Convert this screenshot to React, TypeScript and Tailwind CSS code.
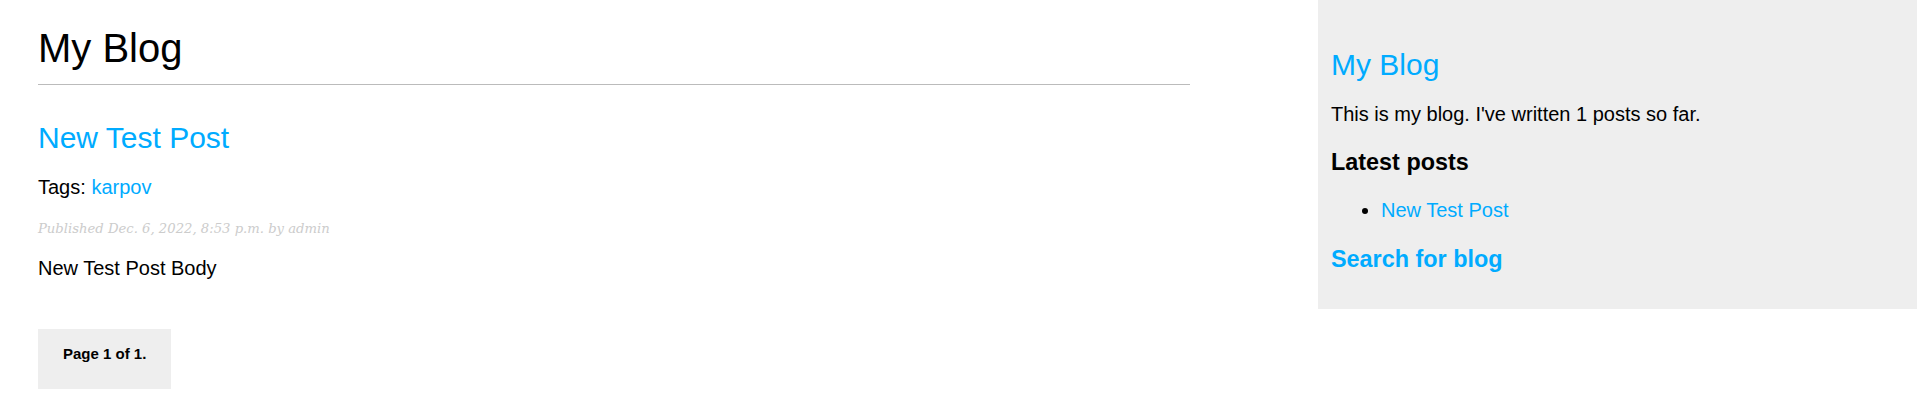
import React from 'react';

const posts = [
  {
    id: 1,
    title: 'New Test Post',
    tags: ['karpov'],
    published: 'Dec. 6, 2022, 8:53 p.m.',
    author: 'admin',
    body: 'New Test Post Body',
  },
];

const App: React.FC = () => {
  return (
    <div className="flex items-start justify-between bg-white font-['Liberation_Sans',Arial,sans-serif] text-[20px] leading-[23px] text-black">
      {/* Content */}
      <div className="w-[1190px] pl-[38px]">
        <h1 className="mt-[25px] border-b border-[#bbbbbb] pb-[13px] text-[40px] font-normal leading-[46px]">
          My Blog
        </h1>

        {posts.map((post) => (
          <div key={post.id}>
            <h2 className="mt-[36px] text-[30px] font-normal leading-[34px]">
              <a href="#" className="text-[#00abff]">
                {post.title}
              </a>
            </h2>
            <p className="mt-[21px]">
              Tags:{' '}
              {post.tags.map((tag) => (
                <a key={tag} href="#" className="text-[#00abff]">
                  {tag}
                </a>
              ))}
            </p>
            <p className="mt-[21px] font-['DejaVu_Serif',Georgia,serif] text-[13.2px] italic leading-[17px] text-[#cccccc]">
              Published {post.published} by {post.author}
            </p>
            <p className="mt-[20px]">{post.body}</p>
          </div>
        ))}

        <div className="mt-[49px] inline-block bg-[#eeeeee] px-[25px] pt-[16px] pb-[27px] text-[15px] font-bold leading-[17px]">
          <span>Page 1 of 1.</span>
        </div>
      </div>

      {/* Sidebar */}
      <div className="w-[599px] bg-[#eeeeee] pt-[12px] pr-[12px] pb-[13px] pl-[13px]">
        <h2 className="mt-[36px] text-[30px] font-normal leading-[34px]">
          <a href="#" className="text-[#00abff]">
            My Blog
          </a>
        </h2>
        <p className="mt-[21px]">This is my blog. I've written 1 posts so far.</p>
        <h3 className="mt-[23px] text-[23.4px] font-bold leading-[27px]">Latest posts</h3>
        <ul className="mt-[23px] list-disc pl-[50px]">
          {posts.map((post) => (
            <li key={post.id}>
              <a href="#" className="text-[#00abff]">
                {post.title}
              </a>
            </li>
          ))}
        </ul>
        <h3 className="mt-[24px] mb-[23px] text-[23.4px] font-bold leading-[27px]">
          <a href="#" className="text-[#00abff]">
            Search for blog
          </a>
        </h3>
      </div>
    </div>
  );
};

export default App;
